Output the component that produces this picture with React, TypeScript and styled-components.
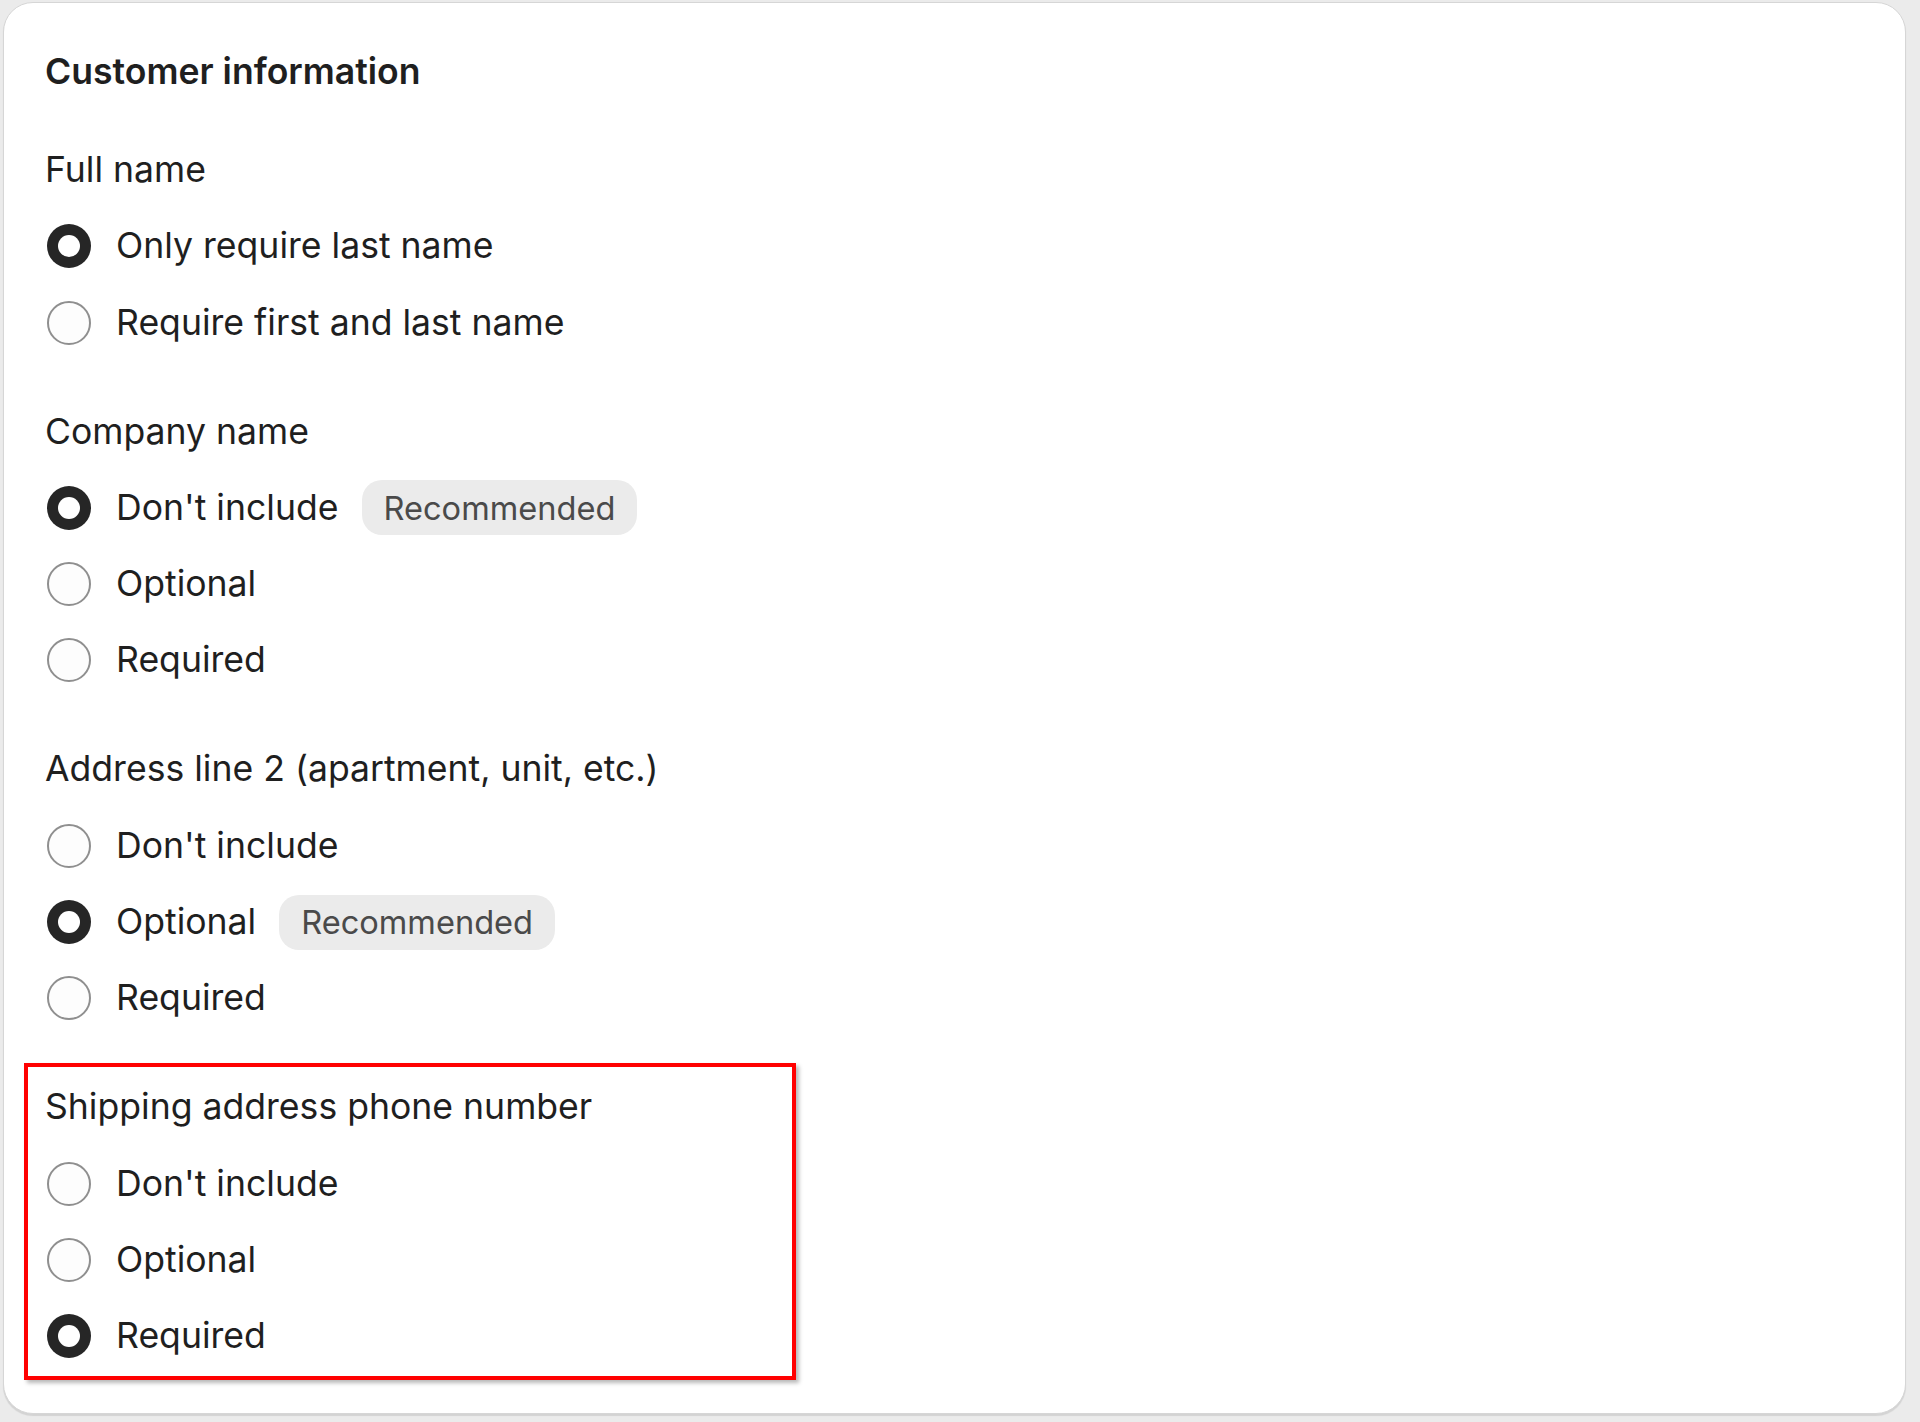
import React from 'react';
import styled, { createGlobalStyle } from 'styled-components';

const GlobalStyle = createGlobalStyle`
  html, body {
    margin: 0;
    padding: 0;
    background: #ebebeb;
  }

  body {
    font-family: Inter, 'Noto Sans', 'Liberation Sans', sans-serif;
    color: #1f1f1f;
    -webkit-font-smoothing: antialiased;
  }

  * {
    box-sizing: border-box;
  }
`;

const Card = styled.section`
  margin: 2px 14px 6px 3px;
  padding: 47px 41px 55px;
  background: #ffffff;
  border: 1px solid #d6d6d6;
  border-radius: 30px;
  box-shadow: 0 2px 1px rgba(0, 0, 0, 0.1);
  display: flex;
  flex-direction: column;
  gap: 54px;
`;

const Title = styled.h2`
  margin: 0;
  font-size: 35.6px;
  line-height: 44px;
  font-weight: 600;
  color: #1f1f1f;
`;

const Groups = styled.div`
  display: flex;
  flex-direction: column;
  gap: 65px;
`;

const Group = styled.fieldset<{ $highlight?: boolean }>`
  margin: 0;
  padding: 0;
  border: none;
  display: flex;
  flex-direction: column;
  gap: 32.3px;
  min-width: 0;

  ${({ $highlight }) =>
    $highlight &&
    `
    width: 772px;
    margin: -22px 0 -22px -21px;
    padding: 18px 17px;
    border: 4px solid #ff0000;
    box-shadow: 3px 3px 4px rgba(0, 0, 0, 0.28);
  `}
`;

const Legend = styled.div`
  font-size: 35.6px;
  line-height: 44px;
  font-weight: 400;
`;

const Option = styled.label`
  display: flex;
  align-items: center;
  height: 44px;
  font-size: 35.6px;
  line-height: 44px;
  cursor: pointer;
`;

const Radio = styled.input.attrs({ type: 'radio' })`
  appearance: none;
  -webkit-appearance: none;
  margin: 0 25px 0 2px;
  width: 44px;
  height: 44px;
  flex: none;
  border-radius: 50%;
  border: 2px solid #8f8f8f;
  background: #fdfdfd;
  display: grid;
  place-items: center;
  cursor: pointer;

  &:checked {
    border: none;
    background: #262626;
  }

  &:checked::after {
    content: '';
    width: 22px;
    height: 22px;
    border-radius: 50%;
    background: #ffffff;
  }
`;

const Badge = styled.span`
  margin-left: 23px;
  height: 55px;
  padding: 0 22px;
  display: inline-flex;
  align-items: center;
  border-radius: 20px;
  background: #ebebeb;
  color: #4a4a4a;
  font-size: 32.6px;
`;

type Choice = { label: string; checked?: boolean; recommended?: boolean };

type Section = { name: string; id: string; choices: Choice[]; highlight?: boolean };

const sections: Section[] = [
  {
    name: 'Full name',
    id: 'full-name',
    choices: [
      { label: 'Only require last name', checked: true },
      { label: 'Require first and last name' },
    ],
  },
  {
    name: 'Company name',
    id: 'company',
    choices: [
      { label: "Don't include", checked: true, recommended: true },
      { label: 'Optional' },
      { label: 'Required' },
    ],
  },
  {
    name: 'Address line 2 (apartment, unit, etc.)',
    id: 'address2',
    choices: [
      { label: "Don't include" },
      { label: 'Optional', checked: true, recommended: true },
      { label: 'Required' },
    ],
  },
  {
    name: 'Shipping address phone number',
    id: 'phone',
    highlight: true,
    choices: [
      { label: "Don't include" },
      { label: 'Optional' },
      { label: 'Required', checked: true },
    ],
  },
];

export default function App() {
  return (
    <>
      <GlobalStyle />
      <Card>
        <Title>Customer information</Title>
        <Groups>
          {sections.map((s) => (
            <Group key={s.id} $highlight={s.highlight}>
              <Legend>{s.name}</Legend>
              {s.choices.map((c) => (
                <Option key={c.label}>
                  <Radio name={s.id} defaultChecked={c.checked} />
                  {c.label}
                  {c.recommended && <Badge>Recommended</Badge>}
                </Option>
              ))}
            </Group>
          ))}
        </Groups>
      </Card>
    </>
  );
}
